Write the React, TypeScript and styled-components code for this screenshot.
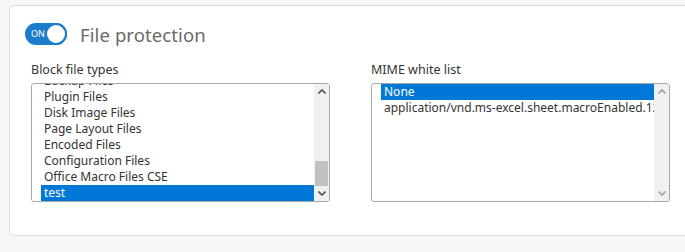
import React from 'react'
import styled, { createGlobalStyle } from 'styled-components'

const GlobalStyle = createGlobalStyle`
  html, body {
    margin: 0;
    padding: 0;
    background: #f8f8f8;
    overflow: hidden;
    font-family: 'Noto Sans', 'Liberation Sans', sans-serif;
  }
`

const BLOCK_FILE_TYPES = [
  'Backup Files',
  'Plugin Files',
  'Disk Image Files',
  'Page Layout Files',
  'Encoded Files',
  'Configuration Files',
  'Office Macro Files CSE',
  'test',
]

const MIME_TYPES = ['None', 'application/vnd.ms-excel.sheet.macroEnabled.12']

const Page = styled.div`
  padding: 5px 0 0 9px;
  height: 252px;
  box-sizing: border-box;
`

const Card = styled.section`
  width: 700px;
  height: 231px;
  box-sizing: border-box;
  background: #fff;
  border: 1px solid #dcdcdc;
  border-radius: 5px;
  padding: 17px 0 0 15px;
`

const Header = styled.div`
  display: flex;
  align-items: center;
  gap: 13px;
  height: 22px;
`

const Toggle = styled.div<{ $on: boolean }>`
  position: relative;
  width: 42px;
  height: 22px;
  box-sizing: border-box;
  border-radius: 11px;
  background: ${({ $on }) => ($on ? '#1b7ccc' : '#bbb')};
  color: #fff;
  font-size: 9px;
  line-height: 22px;
  padding-left: 6px;
`

const Knob = styled.div`
  position: absolute;
  right: 0;
  top: 0;
  width: 22px;
  height: 22px;
  box-sizing: border-box;
  border-radius: 50%;
  background: #fff;
  border: 2px solid #1b7ccc;
`

const Title = styled.h2`
  margin: 0;
  font-size: 18.5px;
  font-weight: 400;
  color: #6a6a6a;
  letter-spacing: 0.1px;
`

const Columns = styled.div`
  display: flex;
  gap: 41px;
  margin: 17px 0 0 6px;
`

const Field = styled.div`
  display: flex;
  flex-direction: column;
  width: 299px;
`

const Label = styled.label`
  font-size: 12.5px;
  color: #333;
  line-height: 16px;
  margin-bottom: 5px;
`

const ListBox = styled.div`
  display: flex;
  height: 119px;
  box-sizing: border-box;
  border: 1px solid #a9a9a9;
  border-radius: 3px;
  overflow: hidden;
`

const Items = styled.div`
  flex: 1;
  overflow: hidden;
  padding-left: 9px;
`

const ItemsInner = styled.div<{ $offset: number }>`
  margin-top: ${({ $offset }) => -$offset}px;
`

const Item = styled.div<{ $selected?: boolean }>`
  height: 16px;
  line-height: 16px;
  padding-left: 3px;
  font-size: 12px;
  white-space: nowrap;
  overflow: hidden;
  color: ${({ $selected }) => ($selected ? '#fff' : '#333')};
  background: ${({ $selected }) => ($selected ? '#0078d7' : 'transparent')};
`

const Scrollbar = styled.div`
  width: 15px;
  display: flex;
  flex-direction: column;
  background: #f0f0f0;
`

const Arrow = styled.div`
  height: 15px;
  display: flex;
  align-items: center;
  justify-content: center;
`

const Track = styled.div`
  flex: 1;
  display: flex;
  flex-direction: column;
  justify-content: flex-end;
  padding: 0 1px;
`

const Thumb = styled.div`
  height: 25px;
  background: #c1c1c1;
`

const Chevron = ({ up, color }: { up?: boolean; color: string }) => (
  <svg width="8" height="5" viewBox="0 0 8 5">
    <polyline
      points={up ? '0.5,4.5 4,1 7.5,4.5' : '0.5,0.5 4,4 7.5,0.5'}
      fill="none"
      stroke={color}
      strokeWidth="1.6"
    />
  </svg>
)

type ListProps = {
  items: string[]
  selected: string
  offset?: number
  scrollable?: boolean
}

const List = ({ items, selected, offset = 0, scrollable }: ListProps) => {
  const arrowColor = scrollable ? '#505050' : '#a3a3a3'
  return (
    <ListBox>
      <Items>
        <ItemsInner $offset={offset}>
          {items.map((item) => (
            <Item key={item} $selected={item === selected}>
              {item}
            </Item>
          ))}
        </ItemsInner>
      </Items>
      <Scrollbar>
        <Arrow>
          <Chevron up color={arrowColor} />
        </Arrow>
        <Track>{scrollable && <Thumb />}</Track>
        <Arrow>
          <Chevron color={arrowColor} />
        </Arrow>
      </Scrollbar>
    </ListBox>
  )
}

export default function App() {
  return (
    <Page>
      <GlobalStyle />
      <Card>
        <Header>
          <Toggle $on>
            ON
            <Knob />
          </Toggle>
          <Title>File protection</Title>
        </Header>
        <Columns>
          <Field>
            <Label>Block file types</Label>
            <List items={BLOCK_FILE_TYPES} selected="test" offset={11} scrollable />
          </Field>
          <Field>
            <Label>MIME white list</Label>
            <List items={MIME_TYPES} selected="None" />
          </Field>
        </Columns>
      </Card>
    </Page>
  )
}
